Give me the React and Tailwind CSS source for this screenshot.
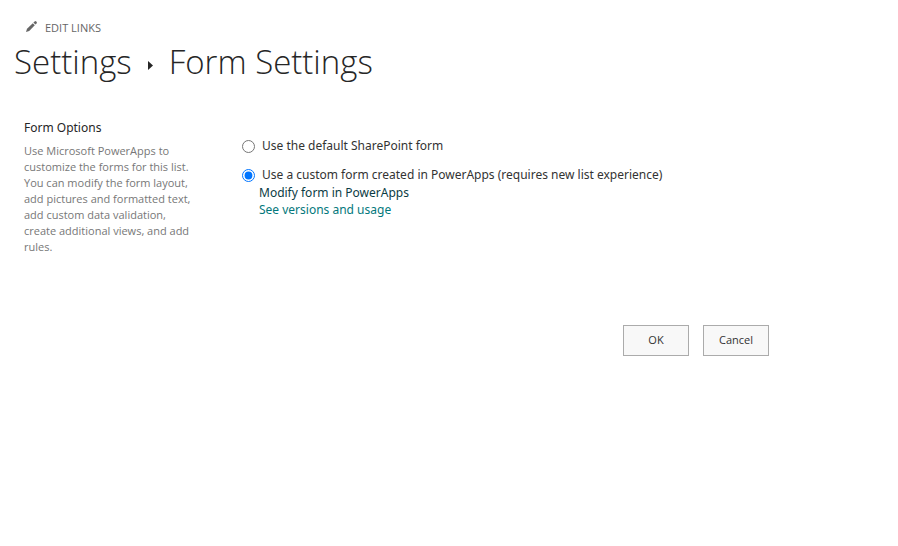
import React, { useState } from 'react';

const formTypes = [
    { value: 'default', label: 'Use the default SharePoint form' },
    { value: 'custom', label: 'Use a custom form created in PowerApps (requires new list experience)' },
];

const PencilIcon = () => (
    <svg width="12" height="16" viewBox="0 0 12 16" fill="#666666" aria-hidden="true">
        <path d="M1 12 L2 8.8 L7.8 3.2 L9.8 5.2 L4.2 11 Z" />
        <path d="M8.4 2.6 L9.6 1.4 Q10.4 0.8 11.2 1.4 L11.6 1.8 Q12.2 2.6 11.6 3.4 L10.4 4.6 Z" />
    </svg>
);

const FormOption = ({ option, selected, onSelect }) => (
    <div className="flex items-center gap-[7px]">
        <input
            type="radio"
            id={option.value}
            name="formType"
            checked={selected}
            onChange={() => onSelect(option.value)}
            className="size-[13px] shrink-0 accent-[#0075ff]"
        />
        <label htmlFor={option.value}>{option.label}</label>
    </div>
);

const PageHeader = () => (
    <header className="flex flex-col items-start gap-0.5 pt-5">
        <a href="#edit" className="ml-[25px] flex h-4 items-center gap-2 text-[11px] text-[#666666]">
            <PencilIcon /> EDIT LINKS
        </a>
        <h1 className="ml-3.5 flex items-center text-[33px] leading-[48px] font-light text-[#262626]">
            <a href="#settings">Settings</a>
            <svg className="mx-4 mt-1.5" width="5" height="9" viewBox="0 0 5 9" fill="#262626" aria-hidden="true">
                <path d="M0 0 L5 4.5 L0 9 Z" />
            </svg>
            <span>Form Settings</span>
        </h1>
    </header>
);

const App = () => {
    const [formType, setFormType] = useState('custom');

    return (
        <div className="min-h-screen bg-white font-['Open_Sans',sans-serif] text-xs text-[#333333]">
            <PageHeader />

            <form className="mt-8 max-w-[769px]" onSubmit={(e) => e.preventDefault()}>
                <div className="flex gap-12 pl-6">
                    <section className="w-[170px] shrink-0">
                        <h2 className="font-['Noto_Sans',sans-serif] leading-5 text-[#262626]">Form Options</h2>
                        <p className="mt-[5px] text-[11px] leading-4 text-[#777777]">
                            Use Microsoft PowerApps to customize the forms for this list. You can modify the
                            form layout, add pictures and formatted text, add custom data validation, create
                            additional views, and add rules.
                        </p>
                    </section>

                    <div className="pt-[19px] font-['Noto_Sans',sans-serif]">
                        <div className="flex flex-col gap-[11px] leading-[18px]">
                            {formTypes.map((option) => (
                                <FormOption
                                    key={option.value}
                                    option={option}
                                    selected={formType === option.value}
                                    onSelect={setFormType}
                                />
                            ))}
                        </div>
                        <div className="ml-[17px] flex flex-col items-start leading-[17px]">
                            <a href="#modify" className="text-[#0b3c44]">Modify form in PowerApps</a>
                            <a href="#versions" className="text-[#03787c]">See versions and usage</a>
                        </div>
                    </div>
                </div>

                <div className="mt-[70px] flex justify-end gap-3.5 text-[11px]">
                    <button type="submit" className="h-[31px] w-[66px] border border-[#ababab] bg-[#f8f8f8]">OK</button>
                    <button type="button" className="h-[31px] w-[66px] border border-[#ababab] bg-[#f8f8f8]">Cancel</button>
                </div>
            </form>
        </div>
    );
};

export default App;
